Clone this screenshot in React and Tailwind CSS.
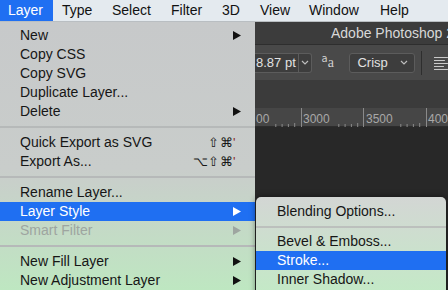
import React from 'react'

const font = "font-['Liberation_Sans',Arial,sans-serif]"

function Arrow({ color = '#111' }) {
  return (
    <svg width="8" height="9" viewBox="0 0 8 9" className="shrink-0">
      <polygon points="0,0 8,4.5 0,9" fill={color} />
    </svg>
  )
}

function Chevron() {
  return (
    <svg width="8" height="5" viewBox="0 0 8 5">
      <polyline points="1,1 4,4 7,1" fill="none" stroke="#bdbdbd" strokeWidth="1.2" />
    </svg>
  )
}

function Item({ label, arrow, shortcut, active, disabled }) {
  const text = active ? 'text-white' : disabled ? 'text-[#9ea5a0]' : 'text-[#161616]'
  return (
    <div className={`flex items-center h-[19px] pl-[20px] pr-[14px] text-[14px] ${text} ${active ? 'bg-[#1f6ff2]' : ''}`}>
      <span className="flex-1">{label}</span>
      {shortcut && (
        <span className="mr-[5px] text-[13px] tracking-[0.5px]">
          {shortcut}
          <span className="text-[#8a2a2a]">'</span>
        </span>
      )}
      {arrow && <Arrow color={active ? '#fff' : disabled ? '#9ea5a0' : '#111'} />}
    </div>
  )
}

function Sep() {
  return <div className="mt-[5px] mb-[5px] h-[2px] bg-[#b6b9b9]" />
}

function Ruler() {
  const majors = [-17, 46, 108, 171]
  const ticks = []
  majors.forEach((m) => {
    for (let k = 6; k <= 9; k++) ticks.push(m + k * 6.3)
  })
  return (
    <svg width="193" height="19" viewBox="0 0 193 19" className="block">
      {majors.map((x) => (
        <line key={x} x1={x + 0.5} y1="0" x2={x + 0.5} y2="19" stroke="#8a8a8a" strokeWidth="1" />
      ))}
      {ticks.map((x, i) => (
        <line key={i} x1={x} y1={i % 4 === 3 ? 15 : 16} x2={x} y2="19" stroke="#8a8a8a" strokeWidth="1" />
      ))}
      <g fill="#a8a8a8" fontSize="12" fontFamily="Liberation Sans, Arial, sans-serif">
        <text x="1" y="15">00</text>
        <text x="48" y="15">3000</text>
        <text x="111" y="15">3500</text>
        <text x="173" y="15">400</text>
      </g>
    </svg>
  )
}

const menus = [
  ['Layer', 'w-[53px] pl-[8px]'],
  ['Type', 'w-[50px] pl-[9px]'],
  ['Select', 'w-[59px] pl-[9px]'],
  ['Filter', 'w-[51px] pl-[9px]'],
  ['3D', 'w-[38px] pl-[9px]'],
  ['View', 'w-[49px] pl-[9px]'],
  ['Window', 'w-[71px] pl-[9px]'],
  ['Help', 'w-[60px] pl-[9px]'],
]

export default function App() {
  return (
    <div className={`relative w-[448px] h-[290px] overflow-hidden ${font}`}>
      {/* mac menu bar */}
      <div className="flex h-[22px] bg-[#e4eaef] border-b border-[#b9bec2] text-[14px] text-[#111]">
        {menus.map(([m, cls], i) => (
          <div key={m} className={`flex items-center shrink-0 ${cls} ${i === 0 ? 'bg-[#1f6ff2] text-white' : ''}`}>
            {m}
          </div>
        ))}
      </div>

      <div className="flex h-[268px]">
        {/* Layer menu */}
        <div className="w-[255px] shrink-0 pt-[4px] bg-linear-to-b from-[#c7c9ca] via-[#c9cdcb] via-55% to-[#bee7c1]">
          <Item label="New" arrow />
          <Item label="Copy CSS" />
          <Item label="Copy SVG" />
          <Item label="Duplicate Layer..." />
          <Item label="Delete" arrow />
          <Sep />
          <Item label="Quick Export as SVG" shortcut="⇧⌘" />
          <Item label="Export As..." shortcut="⌥⇧⌘" />
          <Sep />
          <Item label="Rename Layer..." />
          <Item label="Layer Style" arrow active />
          <Item label="Smart Filter" arrow disabled />
          <Sep />
          <Item label="New Fill Layer" arrow />
          <Item label="New Adjustment Layer" arrow />
        </div>

        {/* Photoshop window */}
        <div className="flex-1 min-w-0 flex flex-col bg-[#282828]">
          <div className="h-[22px] flex items-center pl-[76px] bg-[#3c3c3c] text-[14px] text-[#d8d8d8] whitespace-nowrap overflow-hidden">
            <span className="shrink-0">Adobe Photoshop 2</span>
          </div>
          <div className="h-[36px] flex items-center bg-[#494949] border-t border-[#2e2e2e] text-[13px] text-[#e2e2e2]">
            <div className="flex items-center h-[20px] w-[57px] bg-[#3d3d3d] border border-l-0 border-[#5c5c5c] rounded-r-[3px]">
              <span className="flex-1 pl-[1px]">8.87 pt</span>
              <span className="flex items-center justify-center w-[13px] h-full border-l border-[#5c5c5c]">
                <Chevron />
              </span>
            </div>
            <div className="ml-[10px] w-[16px] flex items-end text-[#d0d0d0] font-['DejaVu_Sans',sans-serif] leading-none">
              <span className="text-[10px] -translate-y-[6px]">a</span>
              <span className="text-[14px] font-['Liberation_Serif',serif]">a</span>
            </div>
            <div className="ml-[12px] flex items-center h-[20px] w-[66px] pl-[7px] pr-[6px] bg-[#3d3d3d] border border-[#5c5c5c] rounded-[3px]">
              <span className="flex-1">Crisp</span>
              <Chevron />
            </div>
            <div className="ml-[6px] w-px h-[24px] bg-[#2e2e2e]" />
            <svg width="14" height="14" viewBox="0 0 14 14" className="ml-[12px]">
              <g stroke="#cfcfcf" strokeWidth="1">
                <line x1="0" y1="1.5" x2="14" y2="1.5" />
                <line x1="0" y1="4.5" x2="11" y2="4.5" />
                <line x1="0" y1="7.5" x2="14" y2="7.5" />
                <line x1="0" y1="10.5" x2="10" y2="10.5" />
                <line x1="0" y1="13.5" x2="14" y2="13.5" />
              </g>
            </svg>
          </div>
          <div className="h-[28px] bg-[#3b3b3b]" />
          <div className="h-[19px] bg-[#464646] border-b border-[#2c2c2c]">
            <Ruler />
          </div>
          <div className="flex-1 bg-[#282828]" />
        </div>
      </div>

      {/* Layer Style submenu */}
      <div className="absolute left-[256px] top-[197px] w-[190px] h-[100px] pt-[5px] rounded-t-[5px] shadow-[0_0_6px_rgba(0,0,0,0.5)] bg-linear-to-b from-[#d3d6d4] to-[#c3eac6]">
        <div className="flex items-center h-[19px] pl-[21px] text-[14px] text-[#161616]">Blending Options...</div>
        <div className="mt-[5px] mb-[4px] h-[2px] bg-[#bcc0bd]" />
        <div className="flex items-center h-[19px] pl-[21px] text-[14px] text-[#161616]">Bevel &amp; Emboss...</div>
        <div className="flex items-center h-[19px] pl-[21px] text-[14px] text-white bg-[#1f6ff2]">Stroke...</div>
        <div className="flex items-center h-[19px] pl-[21px] text-[14px] text-[#161616]">Inner Shadow...</div>
      </div>
    </div>
  )
}
